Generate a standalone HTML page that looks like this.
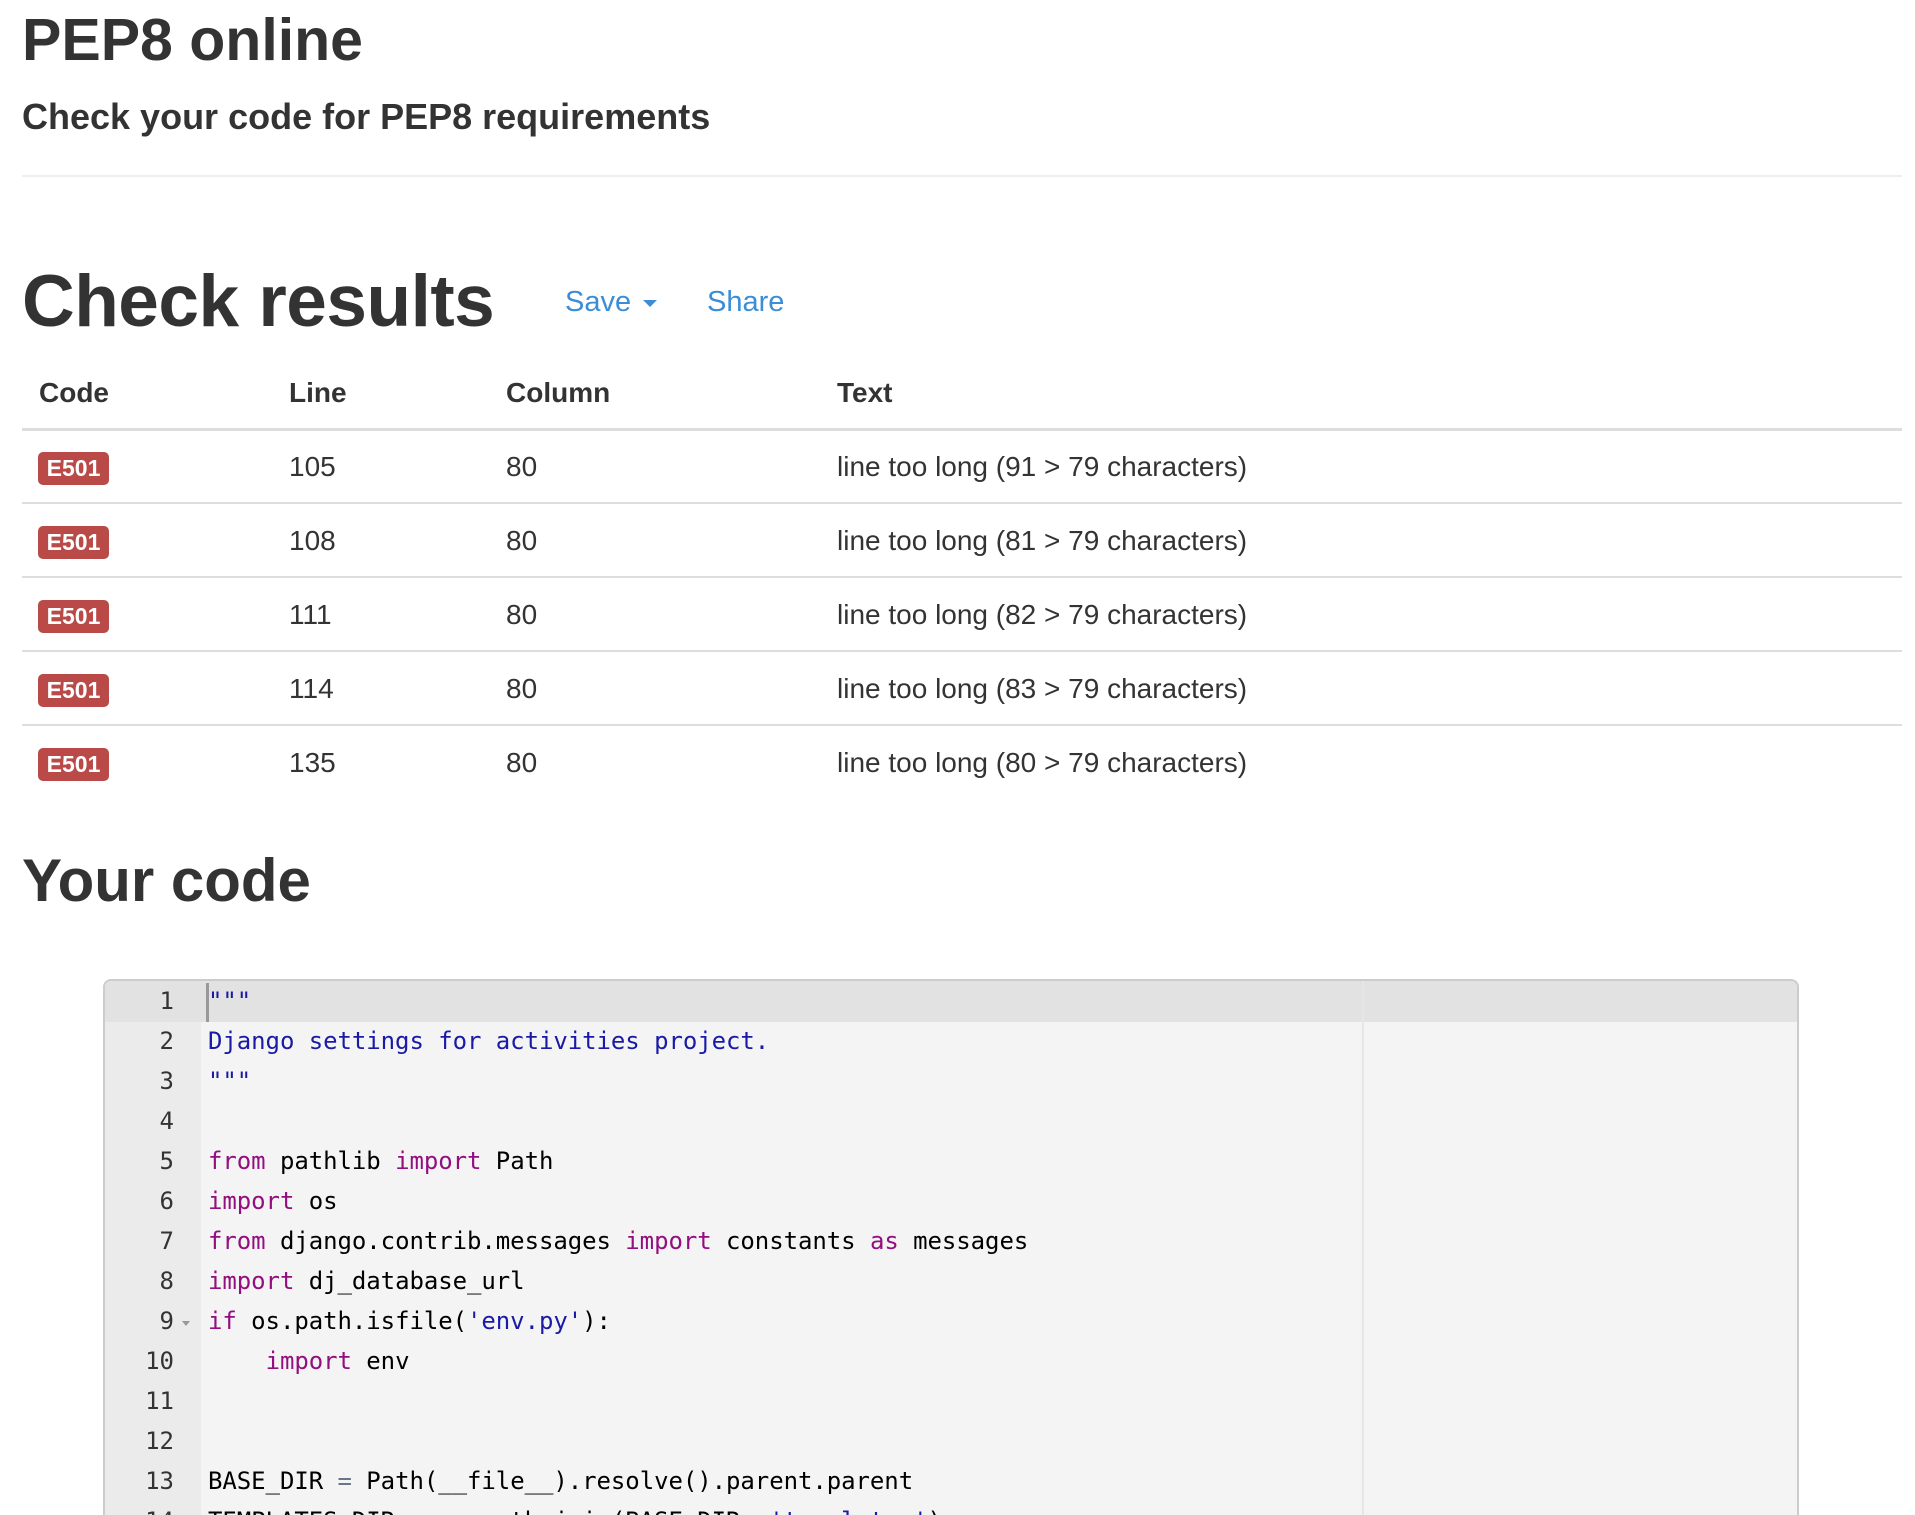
<!DOCTYPE html>
<html><head><meta charset="utf-8"><style>
html,body{margin:0;padding:0;background:#fff;width:1915px;height:1515px;overflow:hidden}
body{font-family:"Liberation Sans",Arial,sans-serif;color:#333;position:relative}
.a{position:absolute;white-space:nowrap}
h1,h3{margin:0;font-weight:bold}
.hr{position:absolute;left:22px;width:1880px;height:2px;background:#eee;top:175px}
.th{font-weight:bold;font-size:28px}
.td{font-size:28px}
.rl{position:absolute;left:22px;width:1880px;height:2px;background:#ddd}
.badge{position:absolute;left:38px;width:71px;height:33px;background:#b94a48;border-radius:5px;color:#fff;font-weight:bold;font-size:23px;text-align:center;line-height:33px}
.ed{position:absolute;left:103px;top:979px;width:1692px;height:600px;background:#f4f4f4;border:2px solid #ccc;border-radius:8px;overflow:hidden}
.gut{position:absolute;left:0;top:0;width:96px;height:100%;background:#ebebeb}
.act{position:absolute;left:0;top:0;width:100%;height:41px;background:#e2e2e2}
.pm{position:absolute;left:1257px;top:0;width:2px;height:100%;background:#e6e6e6}
.ln{position:absolute;left:0;width:69px;text-align:right;font-family:"DejaVu Sans Mono","Liberation Mono",monospace;font-size:24px;color:#333}
.cd{position:absolute;left:103px;font-family:"DejaVu Sans Mono","Liberation Mono",monospace;font-size:24px;color:#000;white-space:pre;letter-spacing:-0.06px}
.k{color:#930f80}.s{color:#1a1aa6}.o{color:#687687}
</style></head><body>
<h1 class="a" style="left:22px;top:6px;font-size:59px">PEP8 online</h1>
<h3 class="a" style="left:22px;top:96px;font-size:36px">Check your code for PEP8 requirements</h3>
<div class="hr"></div>
<h1 class="a" style="left:22px;top:260px;font-size:73px;letter-spacing:-0.5px">Check results</h1>
<div class="a" style="left:565px;top:286px;font-size:29px;color:#3b8ed6">Save <span style="display:inline-block;width:0;height:0;border-left:7px solid transparent;border-right:7px solid transparent;border-top:7px solid #3b8ed6;vertical-align:middle;margin-left:4px"></span></div>
<div class="a" style="left:707px;top:286px;font-size:29px;color:#3b8ed6">Share</div>
<div class="a th" style="left:39px;top:377px">Code</div>
<div class="a th" style="left:289px;top:377px">Line</div>
<div class="a th" style="left:506px;top:377px">Column</div>
<div class="a th" style="left:837px;top:377px">Text</div>
<div class="rl" style="top:428px;height:3px"></div>

<div class="badge" style="top:452px">E501</div>
<div class="a td" style="left:289px;top:451px">105</div><div class="a td" style="left:506px;top:451px">80</div><div class="a td" style="left:837px;top:451px">line too long (91 &gt; 79 characters)</div>
<div class="rl" style="top:502px"></div>
<div class="badge" style="top:526px">E501</div>
<div class="a td" style="left:289px;top:525px">108</div><div class="a td" style="left:506px;top:525px">80</div><div class="a td" style="left:837px;top:525px">line too long (81 &gt; 79 characters)</div>
<div class="rl" style="top:576px"></div>
<div class="badge" style="top:600px">E501</div>
<div class="a td" style="left:289px;top:599px">111</div><div class="a td" style="left:506px;top:599px">80</div><div class="a td" style="left:837px;top:599px">line too long (82 &gt; 79 characters)</div>
<div class="rl" style="top:650px"></div>
<div class="badge" style="top:674px">E501</div>
<div class="a td" style="left:289px;top:673px">114</div><div class="a td" style="left:506px;top:673px">80</div><div class="a td" style="left:837px;top:673px">line too long (83 &gt; 79 characters)</div>
<div class="rl" style="top:724px"></div>
<div class="badge" style="top:748px">E501</div>
<div class="a td" style="left:289px;top:747px">135</div><div class="a td" style="left:506px;top:747px">80</div><div class="a td" style="left:837px;top:747px">line too long (80 &gt; 79 characters)</div>

<h1 class="a" style="left:22px;top:846px;font-size:60px">Your code</h1>

<div class="ed">
<div class="gut"></div>
<div class="act"></div>
<div class="pm"></div>
<div style="position:absolute;left:101px;top:2px;width:3px;height:39px;background:#999"></div>
<div class="ln" style="top:6px">1</div><div class="cd" style="top:6px"><span class="s">"""</span></div>
<div class="ln" style="top:46px">2</div><div class="cd" style="top:46px"><span class="s">Django settings for activities project.</span></div>
<div class="ln" style="top:86px">3</div><div class="cd" style="top:86px"><span class="s">"""</span></div>
<div class="ln" style="top:126px">4</div>
<div class="ln" style="top:166px">5</div><div class="cd" style="top:166px"><span class="k">from</span> pathlib <span class="k">import</span> Path</div>
<div class="ln" style="top:206px">6</div><div class="cd" style="top:206px"><span class="k">import</span> os</div>
<div class="ln" style="top:246px">7</div><div class="cd" style="top:246px"><span class="k">from</span> django.contrib.messages <span class="k">import</span> constants <span class="k">as</span> messages</div>
<div class="ln" style="top:286px">8</div><div class="cd" style="top:286px"><span class="k">import</span> dj_database_url</div>
<div class="ln" style="top:326px">9</div><div style="position:absolute;left:77px;top:340px;width:0;height:0;border-left:4px solid transparent;border-right:4px solid transparent;border-top:5px solid #999"></div><div class="cd" style="top:326px"><span class="k">if</span> os.path.isfile(<span class="s">'env.py'</span>):</div>
<div class="ln" style="top:366px">10</div><div class="cd" style="top:366px">    <span class="k">import</span> env</div>
<div class="ln" style="top:406px">11</div>
<div class="ln" style="top:446px">12</div>
<div class="ln" style="top:486px">13</div><div class="cd" style="top:486px">BASE_DIR <span class="o">=</span> Path(__file__).resolve().parent.parent</div>
<div class="ln" style="top:526px">14</div><div class="cd" style="top:526px">TEMPLATES_DIR <span class="o">=</span> os.path.join(BASE_DIR, <span class="s">'templates'</span>)</div>
</div>
</body></html>
